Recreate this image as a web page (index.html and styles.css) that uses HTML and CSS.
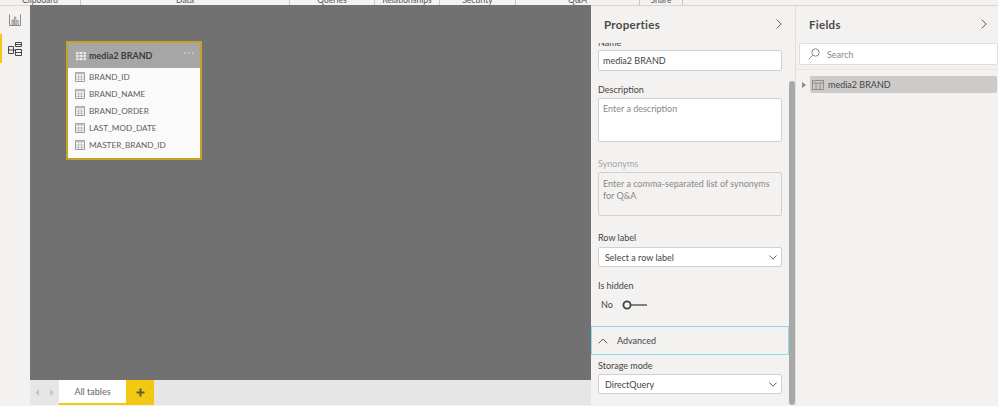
FILE: index.html

```html
<!DOCTYPE html>
<html lang="en">
<head>
  <meta charset="UTF-8">
  <title>Model view</title>
  <link rel="stylesheet" href="styles.css">
</head>
<body>
  <div class="ribbon">
    <div class="group g-clipboard"><span>Clipboard</span></div>
    <div class="group g-data"><span>Data</span></div>
    <div class="group g-queries"><span>Queries</span></div>
    <div class="group g-rel"><span>Relationships</span></div>
    <div class="group g-security"><span>Security</span></div>
    <div class="group g-qa"><span>Q&amp;A</span></div>
    <div class="group g-share"><span>Share</span></div>
  </div>

  <div class="main">
    <div class="rail">
      <div class="rail-item">
        <svg width="12" height="12" viewBox="0 0 12 12" fill="none" stroke="#8a8886">
          <path d="M.5 .5v11h11V.5"/>
          <path d="M3 11V6h1.4v5M5.4 11V3h1.4v8M7.8 11V6.5h1.4V11" stroke-width=".8"/>
        </svg>
      </div>
      <div class="rail-item active">
        <svg width="14" height="14" viewBox="0 0 14 14" fill="none" stroke="#444">
          <path d="M.5 4.5h5v7h-5zM.5 8h5M7.5.5h6v4h-6zM7.5 2.5h6M7.5 7.5h6v6h-6zM7.5 10.5h6M5.5 8h2"/>
        </svg>
      </div>
    </div>

    <div class="center">
      <div class="canvas">
        <div class="table-card">
          <div class="card-head">
            <svg class="grid-icon" width="10" height="10" viewBox="0 0 10 10" fill="#e8e8e8">
              <path d="M0 1h2.6v2.2H0zM3.5 1h3v2.2h-3zM7.4 1H10v2.2H7.4zM0 4h2.6v2.2H0zM3.5 4h3v2.2h-3zM7.4 4H10v2.2H7.4zM0 7h2.6v2.2H0zM3.5 7h3v2.2h-3zM7.4 7H10v2.2H7.4z"/>
            </svg>
            <span class="card-title">media2 BRAND</span>
            <span class="card-more">···</span>
          </div>
          <div class="card-row"><svg class="col-icon" viewBox="0 0 10 10" width="10" height="10"><use href="#col"/></svg>BRAND_ID</div>
          <div class="card-row"><svg class="col-icon" viewBox="0 0 10 10" width="10" height="10"><use href="#col"/></svg>BRAND_NAME</div>
          <div class="card-row"><svg class="col-icon" viewBox="0 0 10 10" width="10" height="10"><use href="#col"/></svg>BRAND_ORDER</div>
          <div class="card-row"><svg class="col-icon" viewBox="0 0 10 10" width="10" height="10"><use href="#col"/></svg>LAST_MOD_DATE</div>
          <div class="card-row"><svg class="col-icon" viewBox="0 0 10 10" width="10" height="10"><use href="#col"/></svg>MASTER_BRAND_ID</div>
        </div>
      </div>
      <div class="tabs">
        <div class="tab-nav">
          <svg width="4" height="7" viewBox="0 0 4 7" fill="#c8c6c4"><path d="M4 0v7L0 3.5z"/></svg>
          <svg width="4" height="7" viewBox="0 0 4 7" fill="#c8c6c4"><path d="M0 0v7l4-3.5z"/></svg>
        </div>
        <div class="tab">All tables</div>
        <div class="tab-add">
          <svg width="9" height="9" viewBox="0 0 9 9" fill="#5f5a3c"><path d="M3.5 .5h2v3h3v2h-3v3h-2v-3h-3v-2h3z"/></svg>
        </div>
      </div>
    </div>

    <div class="props">
      <div class="pane-head">
        <span class="pane-title">Properties</span>
        <svg width="6" height="10" viewBox="0 0 6 10" fill="none" stroke="#605e5c"><path d="M.6.5L5.2 5 .6 9.5"/></svg>
      </div>
      <div class="props-scroll">
        <div class="props-body">
          <label class="lbl lbl-name">Name</label>
          <div class="box input">media2 BRAND</div>
          <label class="lbl lbl-desc">Description</label>
          <div class="box area placeholder">Enter a description</div>
          <label class="lbl lbl-syn muted">Synonyms</label>
          <div class="box area disabled">Enter a comma-separated list of synonyms for Q&amp;A</div>
          <label class="lbl lbl-row">Row label</label>
          <div class="box select">
            <span>Select a row label</span>
            <svg width="8" height="5" viewBox="0 0 8 5" fill="none" stroke="#605e5c"><path d="M.4.5L4 4.2 7.6.5"/></svg>
          </div>
          <label class="lbl lbl-hidden">Is hidden</label>
          <div class="toggle-row">
            <span>No</span>
            <svg width="25" height="10" viewBox="0 0 25 10" fill="none" stroke="#444">
              <circle cx="5" cy="5" r="3.6" stroke-width="1.8"/>
              <path d="M9 5h16" stroke-width="1.3"/>
            </svg>
          </div>
          <div class="section">
            <svg width="10" height="6" viewBox="0 0 10 6" fill="none" stroke="#605e5c"><path d="M.7 5.3L5 1l4.3 4.3"/></svg>
            <span>Advanced</span>
          </div>
          <label class="lbl lbl-storage">Storage mode</label>
          <div class="box select">
            <span>DirectQuery</span>
            <svg width="8" height="5" viewBox="0 0 8 5" fill="none" stroke="#605e5c"><path d="M.4.5L4 4.2 7.6.5"/></svg>
          </div>
        </div>
        <div class="scrollbar"></div>
      </div>
    </div>

    <div class="fields">
      <div class="pane-head">
        <span class="pane-title">Fields</span>
        <svg width="6" height="10" viewBox="0 0 6 10" fill="none" stroke="#605e5c"><path d="M.6.5L5.2 5 .6 9.5"/></svg>
      </div>
      <div class="search">
        <svg width="12" height="12" viewBox="0 0 12 12" fill="none" stroke="#8a8886"><circle cx="7.5" cy="4.5" r="3.7"/><path d="M4.8 7.2L.7 11.3"/></svg>
        <span>Search</span>
      </div>
      <div class="tree">
        <svg class="tree-arrow" width="4" height="6" viewBox="0 0 4 6" fill="#8a8886"><path d="M0 0v6l4-3z"/></svg>
        <div class="tree-row">
          <svg width="12" height="10" viewBox="0 0 12 10" fill="none" stroke="#8a8886" stroke-width=".9"><path d="M.5.5h11v9H.5zM.5 3h11M4 3v6.5M8 3v6.5"/></svg>
          <span>media2 BRAND</span>
        </div>
      </div>
    </div>
  </div>

  <svg class="defs" width="0" height="0">
    <symbol id="col" viewBox="0 0 10 10">
      <path d="M.5.5h9v9h-9z" fill="#fff" stroke="#9a9a9a"/>
      <path d="M.5.5h9v2h-9z" fill="#bdbdbd"/>
      <path d="M1 5h8M1 7.3h8M3.6 3v6M6.4 3v6" stroke="#a8a8a8" stroke-width=".7"/>
    </symbol>
  </svg>
</body>
</html>
```

FILE: styles.css

```css
* {
  box-sizing: border-box;
}
html, body {
  height: 100%;
}
body {
  margin: 0;
  background: #f3f2f1;
  font-family: Lato, "Noto Sans", sans-serif;
  font-size: 9px;
  color: #444;
  display: flex;
  flex-direction: column;
  overflow: hidden;
}
.defs {
  position: absolute;
}

/* ribbon, only the bottom edge of it is visible */
.ribbon {
  height: 5px;
  flex: none;
  display: flex;
  overflow: hidden;
  background: #f3f2f1;
}
.group {
  height: 5px;
  border-right: 1px solid #c8c6c4;
  text-align: center;
  line-height: 3px;
  font-size: 8.5px;
  color: #555;
}
.group span {
  display: block;
  margin-top: -1px;
}
.g-clipboard { width: 81px; }
.g-data { width: 209px; }
.g-queries { width: 85px; }
.g-rel { width: 65px; }
.g-security { width: 76px; }
.g-qa { width: 124px; }
.g-share { width: 43px; }

.main {
  flex: 1;
  min-height: 0;
  display: flex;
  box-shadow: inset 0 1px 1px rgba(0, 0, 0, 0.12);
}

/* left rail */
.rail {
  width: 30px;
  flex: none;
}
.rail-item {
  height: 29px;
  display: flex;
  align-items: center;
  justify-content: center;
  border-left: 2px solid transparent;
  padding-right: 2px;
}
.rail-item.active {
  border-left-color: #f2c811;
}

.center {
  width: 561px;
  flex: none;
  display: flex;
  flex-direction: column;
}
.canvas {
  flex: 1;
  background: #717171;
  position: relative;
}
.table-card {
  position: absolute;
  left: 36px;
  top: 36px;
  width: 136px;
  height: 119px;
  border: 2px solid #c4a225;
  background: #fafafa;
}
.card-head {
  height: 25px;
  background: #a6a6a6;
  display: flex;
  align-items: center;
  padding-left: 8px;
  color: #3c3c3c;
}
.grid-icon {
  margin-right: 3px;
}
.card-title {
  font-weight: 700;
  font-size: 9px;
}
.card-more {
  margin-left: auto;
  margin-right: 5px;
  margin-top: -6px;
  color: #d0d0d0;
  font-size: 11px;
  letter-spacing: 1px;
}
.card-row {
  height: 17px;
  display: flex;
  align-items: center;
  padding-left: 7px;
  color: #605e5c;
  font-size: 8.2px;
}
.col-icon {
  margin-right: 4px;
}

.tabs {
  height: 26px;
  flex: none;
  display: flex;
  background: #e6e6e6;
  border-bottom: 1px solid #f3f2f1;
}
.tab-nav {
  width: 29px;
  display: flex;
  align-items: center;
  justify-content: center;
  gap: 11px;
}
.tab {
  width: 67px;
  background: #fff;
  border-bottom: 2px solid #f2c811;
  display: flex;
  align-items: center;
  justify-content: center;
  color: #666;
  font-size: 9px;
}
.tab-add {
  width: 28px;
  background: #f2c811;
  display: flex;
  align-items: center;
  justify-content: center;
}

/* properties pane */
.props {
  width: 205px;
  flex: none;
  display: flex;
  flex-direction: column;
  border-right: 1px solid #e1dfdd;
  min-height: 0;
}
.pane-head {
  height: 38px;
  flex: none;
  display: flex;
  align-items: center;
  justify-content: space-between;
  padding: 0 13px 0 13px;
}
.fields .pane-head {
  padding-right: 11px;
}
.pane-title {
  font-size: 11.5px;
  font-weight: 700;
  color: #4a4a4a;
  letter-spacing: .3px;
}
.props-scroll {
  flex: 1;
  min-height: 0;
  position: relative;
  overflow: hidden;
}
.props-body {
  width: 198px;
  margin-top: -6px;
}
.scrollbar {
  position: absolute;
  right: 0;
  top: 38px;
  width: 6px;
  bottom: 1px;
  background: #a8a8a8;
  border-radius: 3px;
}
.lbl {
  display: block;
  margin-left: 7px;
  line-height: 12px;
  color: #444;
}
.lbl.muted {
  color: #a6a6a6;
}
.lbl-name { height: 13px; }
.lbl-desc { margin-top: 13px; height: 14px; }
.lbl-syn { margin-top: 16px; height: 14px; }
.lbl-row { margin-top: 16px; height: 15px; }
.lbl-hidden { margin-top: 13px; height: 15px; }
.lbl-storage { margin-top: 5px; height: 14px; }
.box {
  margin-left: 7px;
  width: 184px;
  background: #fff;
  border: 1px solid #d2d0ce;
  border-radius: 2px;
  color: #444;
}
.input {
  height: 21px;
  padding: 0 4px;
  line-height: 19px;
}
.area {
  height: 44px;
  padding: 4px 4px;
  line-height: 12px;
}
.placeholder {
  color: #8a8886;
}
.disabled {
  background: #f3f2f1;
  color: #8a8886;
  padding-top: 5px;
}
.select {
  height: 20px;
  padding: 0 4px 0 6px;
  display: flex;
  align-items: center;
  justify-content: space-between;
}
.toggle-row {
  height: 19px;
  padding-left: 10px;
  display: flex;
  align-items: center;
  gap: 9px;
}
.section {
  height: 29px;
  margin-top: 12px;
  border: 1px solid #8fdcf0;
  display: flex;
  align-items: center;
  gap: 9px;
  padding-left: 6px;
}

/* fields pane */
.fields {
  flex: 1;
  min-width: 0;
}
.search {
  height: 22px;
  margin-left: 3px;
  background: #fff;
  border: 1px solid #e1dfdd;
  border-radius: 2px;
  display: flex;
  align-items: center;
  gap: 7px;
  padding-left: 8px;
  color: #8a8886;
}
.tree {
  margin-top: 4px;
  border-top: 1px solid #e9e7e5;
  padding: 6px 1px 0 6px;
  display: flex;
  align-items: center;
  gap: 4px;
}
.tree-row {
  flex: 1;
  height: 17px;
  background: #cdcbc9;
  border-radius: 2px;
  display: flex;
  align-items: center;
  gap: 4px;
  padding-left: 2px;
}
```
